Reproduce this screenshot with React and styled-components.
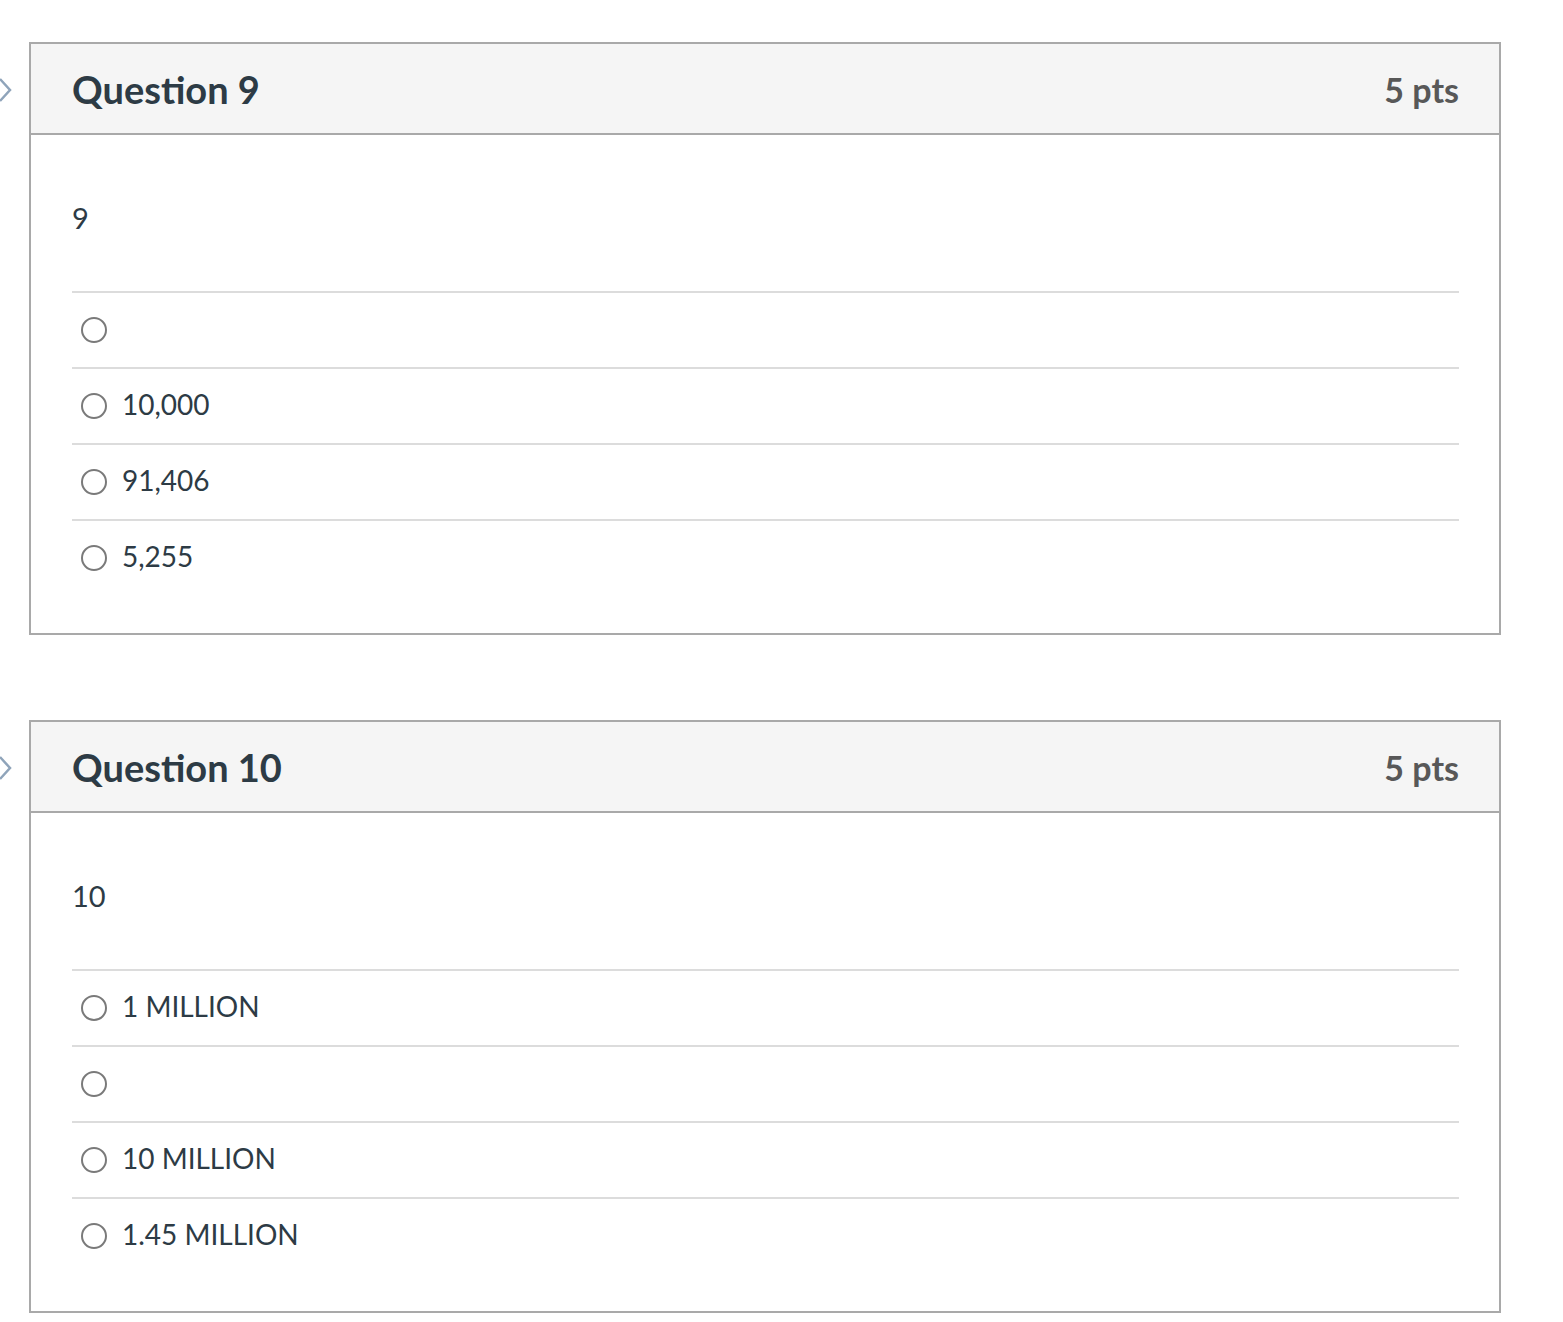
import React from "react";
import styled, { createGlobalStyle } from "styled-components";

const Global = createGlobalStyle`
  html, body { margin: 0; padding: 0; background: #fff; }
  body { font-family: Lato, "Open Sans", sans-serif; color: #2d3b45; }
`;

const Page = styled.div`
  padding: 42px 0 10px 29px;
  width: 1472px;
  display: flex;
  flex-direction: column;
  gap: 85px;
`;

const QuestionWrap = styled.div`
  position: relative;
`;

const Chevron = styled.svg`
  position: absolute;
  left: -29px;
  top: 36px;
  width: 14px;
  height: 24px;
`;

const Card = styled.section`
  border: 2px solid #a9a9a9;
  background: #fff;
`;

const Header = styled.header`
  display: flex;
  align-items: center;
  justify-content: space-between;
  height: 89px;
  padding: 0 40px 0 41px;
  background: #f5f5f5;
  border-bottom: 2px solid #a9a9a9;
`;

const Title = styled.h2`
  margin: 0;
  font-size: 38px;
  font-weight: 700;
  color: #2d3b45;
  line-height: 1;
`;

const Points = styled.span`
  font-size: 34px;
  font-weight: 700;
  color: #585858;
  line-height: 1;
  padding-top: 2px;
`;

const Body = styled.div`
  padding: 62px 40px 38px 41px;
`;

const Prompt = styled.p`
  margin: 0 0 52px;
  font-size: 29px;
  line-height: 42px;
  height: 42px;
  color: #2d3b45;
`;

const AnswerList = styled.ul`
  list-style: none;
  margin: 0;
  padding: 0;
`;

const Answer = styled.li`
  display: flex;
  align-items: center;
  gap: 15px;
  height: 74px;
  border-top: 2px solid #dcdcdc;
  padding-left: 9px;
  font-size: 28px;
  color: #2d3b45;
`;

const Radio = styled.span`
  box-sizing: border-box;
  width: 26px;
  height: 26px;
  border-radius: 50%;
  border: 2px solid #7a7a7a;
  background: #fff;
  flex: none;
`;

const Label = styled.span`
  line-height: 1;
  margin-top: -4px;
`;

const questions = [
  { title: "Question 9", pts: "5 pts", prompt: "9", answers: ["", "10,000", "91,406", "5,255"] },
  { title: "Question 10", pts: "5 pts", prompt: "10", answers: ["1 MILLION", "", "10 MILLION", "1.45 MILLION"] },
];

export default function App() {
  return (
    <>
      <Global />
      <Page>
        {questions.map((q) => (
          <QuestionWrap key={q.title}>
            <Chevron viewBox="0 0 14 24">
              <polyline points="0,1 10,12 0,23" fill="none" stroke="#8fa4ba" strokeWidth="2.5" />
            </Chevron>
            <Card>
              <Header>
                <Title>{q.title}</Title>
                <Points>{q.pts}</Points>
              </Header>
              <Body>
                <Prompt>{q.prompt}</Prompt>
                <AnswerList>
                  {q.answers.map((a, i) => (
                    <Answer key={i}>
                      <Radio />
                      <Label>{a}</Label>
                    </Answer>
                  ))}
                </AnswerList>
              </Body>
            </Card>
          </QuestionWrap>
        ))}
      </Page>
    </>
  );
}
